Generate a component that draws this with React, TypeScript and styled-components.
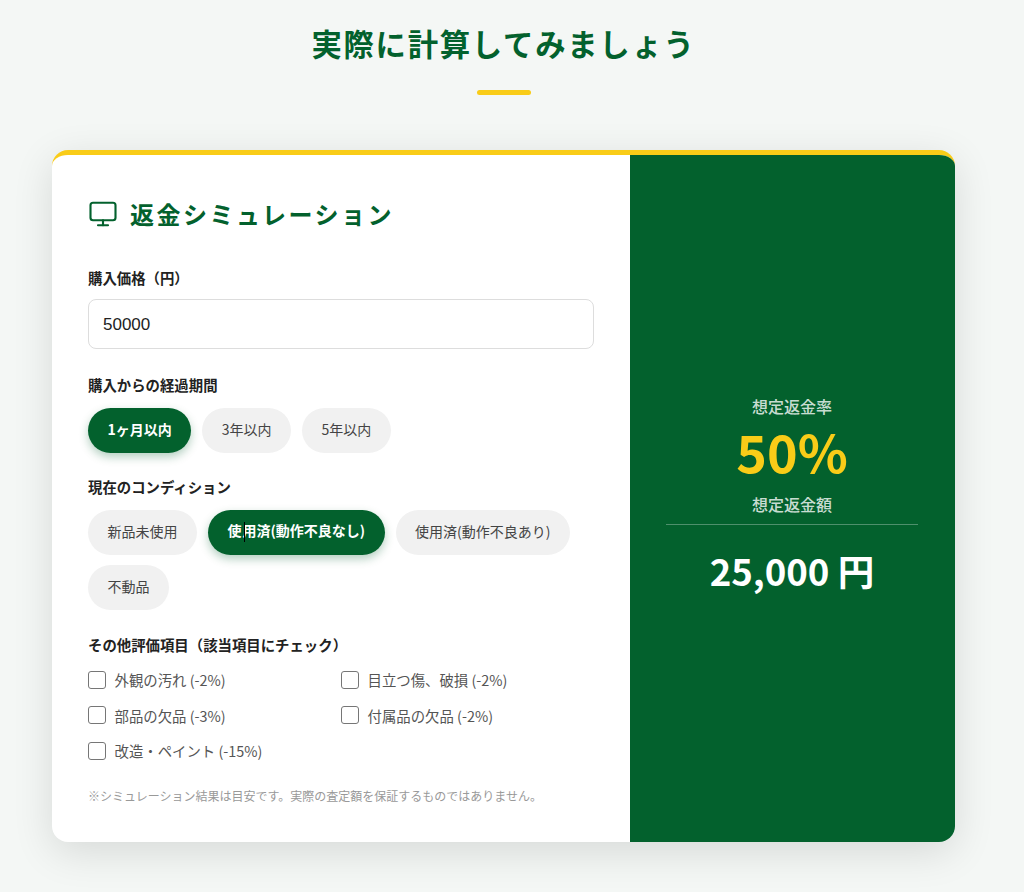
import React from "react";
import styled, { createGlobalStyle } from "styled-components";
import { Monitor } from "lucide-react";

const GREEN = "#03612d";
const YELLOW = "#f9cc18";
const FONT = `"Noto Sans CJK JP", "Noto Sans", sans-serif`;

const GlobalStyle = createGlobalStyle`
  html, body {
    margin: 0;
    padding: 0;
    background: #f4f7f5;
    font-family: ${FONT};
  }
  body {
    overflow: hidden;
  }
`;

const Page = styled.section`
  width: 1007px;
  height: 892px;
  box-sizing: border-box;
  padding: 22px 52px 0;
`;

const Title = styled.h2`
  margin: 0;
  text-align: center;
  font-size: 30.4px;
  line-height: 43px;
  font-weight: 700;
  letter-spacing: 1.7px;
  color: ${GREEN};
`;

const TitleBar = styled.div`
  width: 54px;
  height: 5px;
  border-radius: 3px;
  background: ${YELLOW};
  margin: 25px auto 55px;
`;

const Card = styled.div`
  display: grid;
  grid-template-columns: 578px 325px;
  height: 692px;
  box-sizing: border-box;
  background: #fff;
  border-top: 5px solid ${YELLOW};
  border-radius: 16px;
  overflow: hidden;
  box-shadow: 0 10px 40px rgba(0, 0, 0, 0.12);
`;

const FormPane = styled.div`
  padding: 41px 36px 0;
`;

const Heading = styled.h3`
  display: flex;
  align-items: center;
  gap: 12px;
  margin: 0 0 38px;
  font-size: 24px;
  line-height: 35px;
  font-weight: 700;
  letter-spacing: 2.5px;
  color: ${GREEN};
  svg {
    flex: none;
  }
`;

const Field = styled.div<{ $gap?: number }>`
  margin-bottom: ${({ $gap }) => $gap ?? 26}px;
`;

const Label = styled.div`
  font-size: 14.4px;
  line-height: 18px;
  font-weight: 700;
  color: #222;
  margin-bottom: 14px;
`;

const PriceInput = styled.input`
  display: block;
  width: 100%;
  height: 50px;
  margin-top: -2px;
  box-sizing: border-box;
  padding: 1px 14px 0;
  border: 1px solid #ddd;
  border-radius: 8px;
  background: #fff;
  font-family: "Liberation Sans", Arial, sans-serif;
  font-size: 17px;
  color: #222;
  outline: none;
`;

const Pills = styled.div`
  display: flex;
  flex-wrap: wrap;
  gap: 10px 11px;
`;

const Pill = styled.div<{ $active?: boolean }>`
  height: 45px;
  box-sizing: border-box;
  padding: 0 19.5px 3px;
  display: flex;
  align-items: center;
  border-radius: 23px;
  font-size: 14px;
  font-weight: ${({ $active }) => ($active ? 700 : 400)};
  color: ${({ $active }) => ($active ? "#fff" : "#444")};
  background: ${({ $active }) => ($active ? GREEN : "#f1f1f1")};
  box-shadow: ${({ $active }) =>
    $active ? "0 4px 10px rgba(3, 97, 45, 0.3)" : "none"};
`;

// text cursor caught in the shot, sits over the next glyph
const Caret = styled.span`
  position: relative;
  display: inline-block;
  width: 0;
  height: 20px;
  margin: -2px -2px 0 2px;
  vertical-align: middle;
  border-left: 1px solid #000;
`;

const Checks = styled.div`
  display: grid;
  grid-template-columns: 253px 253px;
  row-gap: 16.5px;
  margin-top: 16px;
`;

const CheckRow = styled.label`
  display: flex;
  align-items: center;
  gap: 8.5px;
  height: 19px;
  font-size: 14.4px;
  color: #555;
`;

const CheckBox = styled.input`
  appearance: none;
  flex: none;
  width: 18px;
  height: 18px;
  margin: 0;
  box-sizing: border-box;
  border: 1px solid #767676;
  border-radius: 3px;
  background: #fff;
`;

const Note = styled.p`
  margin: 27px 0 0;
  font-size: 12px;
  line-height: 18px;
  color: #999;
`;

const ResultPane = styled.div`
  background: ${GREEN};
  display: flex;
  flex-direction: column;
  align-items: center;
  justify-content: center;
  padding: 0 37px 6px 36px;
  color: #fff;
`;

const ResultLabel = styled.div`
  font-size: 16px;
  line-height: 24px;
  font-weight: 500;
  color: rgba(255, 255, 255, 0.8);
`;

const Rate = styled.div`
  font-size: 52px;
  line-height: 64px;
  margin: 1px 0 9px;
  font-weight: 700;
  color: ${YELLOW};
`;

const AmountBlock = styled.div`
  width: 100%;
  margin-top: 8px;
  padding-top: 20px;
  border-top: 1px solid rgba(255, 255, 255, 0.3);
  text-align: center;
  font-size: 36.6px;
  line-height: 52px;
  font-weight: 700;
`;

const periods = ["1ヶ月以内", "3年以内", "5年以内"];

const checks = [
  "外観の汚れ (-2%)",
  "目立つ傷、破損 (-2%)",
  "部品の欠品 (-3%)",
  "付属品の欠品 (-2%)",
  "改造・ペイント (-15%)",
];

export default function App() {
  return (
    <Page>
      <GlobalStyle />
      <Title>実際に計算してみましょう</Title>
      <TitleBar />
      <Card>
        <FormPane>
          <Heading>
            <Monitor size={30} strokeWidth={1.7} />
            返金シミュレーション
          </Heading>
          <Field $gap={27}>
            <Label>購入価格（円）</Label>
            <PriceInput type="text" defaultValue="50000" />
          </Field>
          <Field $gap={25}>
            <Label>購入からの経過期間</Label>
            <Pills>
              {periods.map((p, i) => (
                <Pill key={p} $active={i === 0}>
                  {p}
                </Pill>
              ))}
            </Pills>
          </Field>
          <Field>
            <Label>現在のコンディション</Label>
            <Pills>
              <Pill>新品未使用</Pill>
              <Pill $active>
                <span>
                  使<Caret />用済(動作不良なし)
                </span>
              </Pill>
              <Pill>使用済(動作不良あり)</Pill>
              <Pill>不動品</Pill>
            </Pills>
          </Field>
          <Field $gap={0}>
            <Label>その他評価項目（該当項目にチェック）</Label>
            <Checks>
              {checks.map((c) => (
                <CheckRow key={c}>
                  <CheckBox type="checkbox" />
                  {c}
                </CheckRow>
              ))}
            </Checks>
          </Field>
          <Note>※シミュレーション結果は目安です。実際の査定額を保証するものではありません。</Note>
        </FormPane>
        <ResultPane>
          <ResultLabel>想定返金率</ResultLabel>
          <Rate>50%</Rate>
          <ResultLabel>想定返金額</ResultLabel>
          <AmountBlock>25,000 円</AmountBlock>
        </ResultPane>
      </Card>
    </Page>
  );
}
